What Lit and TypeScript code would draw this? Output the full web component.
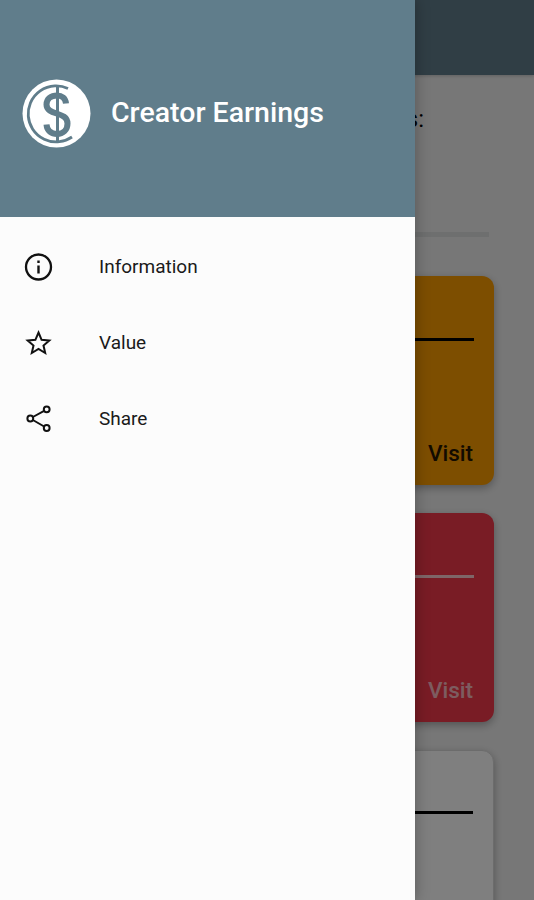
import { LitElement, html, css } from "lit";
import { customElement } from "lit/decorators.js";

@customElement("app-root")
export class AppRoot extends LitElement {
  static styles = css`
    :host { display: block; position: relative; width: 534px; height: 900px; overflow: hidden; font-family: Roboto, "Liberation Sans", sans-serif; background: #efefef; }
    .page { display: flex; flex-direction: column; height: 900px; overflow: hidden; }
    .appbar { height: 75px; flex: none; background: #607d8b; box-shadow: 0 1px 3px rgba(0,0,0,.2); }
    .heading { flex: none; margin: 28px 110px 0 40px; height: 32px; line-height: 32px; font-size: 24px; text-align: right; color: #000; }
    .bar { height: 5px; margin: 97px 45px 0 40px; background: #dcdfde; flex: none; }
    .cards { flex: none; display: flex; flex-direction: column; gap: 28px; padding: 39px 40px 0; }
    .card { flex: none; height: 209px; box-sizing: border-box; border-radius: 12px; padding: 62px 20px 0; display: flex; flex-direction: column; box-shadow: 0 3px 8px rgba(0,0,0,.3); }
    .orange { background: #fb9c00; color: #000; }
    .red { background: #f2384a; color: #fff; }
    .white { background: #fff; color: #000; border: 1px solid #d8d8d8; padding-top: 60px; }
    .rule { height: 3px; background: currentColor; flex: none; }
    .red .rule { opacity: .75; }
    .visit { margin-top: auto; margin-bottom: 19px; margin-right: 1px; align-self: flex-end; font-weight: 500; font-size: 22.500px; line-height: 26px; opacity: .85; }
    .red .visit { opacity: .65; }
    .scrim { position: absolute; inset: 0; background: rgba(0,0,0,.5); }
    .drawer { position: absolute; left: 0; top: 0; bottom: 0; width: 415px; background: #fcfcfc; box-shadow: 0 0 14px rgba(0,0,0,.3); display: flex; flex-direction: column; }
    .head { height: 217px; flex: none; box-sizing: border-box; background: #607d8b; display: flex; align-items: center; gap: 20px; padding: 9px 0 0 22px; }
    .logo { width: 69px; height: 69px; flex: none; display: block; }
    .title { color: #fff; font-size: 28.500px; font-weight: 500; transform: translateY(-1px); }
    .items { display: flex; flex-direction: column; padding-top: 12px; }
    .item { height: 76px; display: flex; align-items: center; padding-left: 22px; gap: 45px; font-size: 19px; color: #1a1a1a; }
    .item svg { width: 32px; height: 32px; flex: none; fill: none; stroke: #111; stroke-width: 2; }
    .item span { transform: translateY(-1px); }
  `;

  card(cls: string, visit = true) {
    return html`<div class="card ${cls}"><div class="rule"></div>${visit ? html`<div class="visit">Visit</div>` : ""}</div>`;
  }

  render() {
    return html`
      <div class="page">
        <div class="appbar"></div>
        <div class="heading">Creators:</div>
        <div class="bar"></div>
        <div class="cards">${this.card("orange")}${this.card("red")}${this.card("white", false)}</div>
      </div>
      <div class="scrim"></div>
      <aside class="drawer">
        <header class="head">
          <svg class="logo" viewBox="0 0 69 69">
            <circle cx="34.500" cy="34.500" r="34" fill="#fff"/>
            <g fill="none" stroke="#607d8b">
              <path d="M46 9.500A28 28 0 1 0 50 58" stroke-width="2.800"/>
              <path d="M44 24.500C43.500 19.500 40 16.500 35 16.500C29 16.500 24.500 19.500 24.500 25.500C24.500 37 45.500 32 45.500 44.500C45.500 51 41 55 35 55C29.500 55 25 52 24.500 45.500" stroke-width="6"/>
              <path d="M35.500 8V62" stroke-width="3"/>
            </g>
          </svg>
          <div class="title">Creator Earnings</div>
        </header>
        <nav class="items">
          <div class="item">
            <svg viewBox="0 0 32 32"><circle cx="16.500" cy="16" r="12.500" stroke-width="2.300"/><path d="M16.500 14.500V22.500" stroke-width="2.400"/><path d="M16.500 9.500V12" stroke-width="2.400"/></svg>
            <span>Information</span>
          </div>
          <div class="item">
            <svg viewBox="0 0 32 32"><path d="M16.500 5.500L19.600 12.800L27.300 13.500L21.500 18.500L23.200 26L16.500 22L9.800 26L11.500 18.500L5.700 13.500L13.400 12.800Z" stroke-linejoin="miter"/></svg>
            <span>Value</span>
          </div>
          <div class="item">
            <svg viewBox="0 0 32 32"><circle cx="24.700" cy="6.300" r="2.900"/><circle cx="8.300" cy="15.500" r="2.900"/><circle cx="24.700" cy="25" r="2.900"/><path d="M10.900 14L22.100 7.800M10.900 17L22.100 23.500"/></svg>
            <span>Share</span>
          </div>
        </nav>
      </aside>
    `;
  }
}
